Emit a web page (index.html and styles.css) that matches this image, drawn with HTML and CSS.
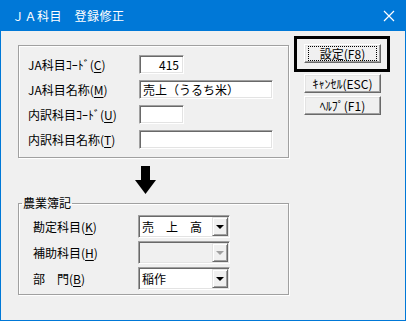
FILE: index.html
```html
<!DOCTYPE html>
<html lang="ja">
<head>
    <meta charset="UTF-8">
    <title>ＪＡ科目　登録修正</title>
    <link rel="stylesheet" href="styles.css">
</head>
<body>
    <div class="window">
        <div class="titlebar">
            <span class="title">ＪＡ科目　登録修正</span>
            <svg class="close" width="12" height="12" viewBox="0 0 12 12">
                <path d="M1 1L11 11M11 1L1 11" stroke="#fff" stroke-width="1.2" fill="none"/>
            </svg>
        </div>
        <div class="client">
            <div class="left">
                <div class="group">
                    <label class="lbl">JA科目ｺｰﾄﾞ(<u>C</u>)</label>
                    <div class="edit short num">415</div>
                    <label class="lbl">JA科目名称(<u>M</u>)</label>
                    <div class="edit long">売上（うるち米）</div>
                    <label class="lbl">内訳科目ｺｰﾄﾞ(<u>U</u>)</label>
                    <div class="edit short"></div>
                    <label class="lbl">内訳科目名称(<u>T</u>)</label>
                    <div class="edit long"></div>
                </div>

                <svg class="arrow" width="21" height="28" viewBox="0 0 21 28">
                    <rect x="6" y="0" width="9" height="15" fill="#000"/>
                    <polygon points="0,14 21,14 10.5,28" fill="#000"/>
                </svg>

                <fieldset class="group2">
                    <legend>農業簿記</legend>
                    <label class="lbl">勘定科目(<u>K</u>)</label>
                    <div class="combo">
                        <span class="combo-text">売　上　高</span>
                        <span class="drop"><i class="tri"></i></span>
                    </div>
                    <label class="lbl">補助科目(<u>H</u>)</label>
                    <div class="combo disabled">
                        <span class="combo-text"></span>
                        <span class="drop"><i class="tri"></i></span>
                    </div>
                    <label class="lbl">部　門(<u>B</u>)</label>
                    <div class="combo">
                        <span class="combo-text">稲作</span>
                        <span class="drop"><i class="tri"></i></span>
                    </div>
                </fieldset>
            </div>

            <div class="right">
                <div class="default-frame">
                    <button class="btn"><span class="focus">設定(F8)</span></button>
                </div>
                <button class="btn cancel">ｷｬﾝｾﾙ(ESC)</button>
                <button class="btn help">ﾍﾙﾌﾟ(F1)</button>
            </div>
        </div>
    </div>
</body>
</html>
```

FILE: styles.css
```css
body {
    margin: 0;
    font-family: "Noto Sans CJK JP", sans-serif;
    font-size: 12px;
    color: #000;
}

.window {
    width: 406px;
    height: 321px;
    box-sizing: border-box;
    background-color: #0078d7;
    border: 1px solid #0078d7;
    border-top: none;
    display: flex;
    flex-direction: column;
}

.titlebar {
    height: 31px;
    display: flex;
    align-items: center;
    justify-content: space-between;
    padding: 0 10px 0 11px;
}
.title {
    color: #fff;
    font-size: 12px;
    letter-spacing: 0.5px;
}
.close {
    display: block;
}

.client {
    flex: 1;
    background-color: #f0f0f0;
    display: flex;
    align-items: flex-start;
}

.left {
    width: 271px;
    margin: 14px 0 0 17px;
    display: flex;
    flex-direction: column;
}

.group {
    height: 113px;
    box-sizing: border-box;
    border: 1px solid #a0a0a0;
    box-shadow: inset 1px 1px 0 #fff, 1px 1px 0 #fff;
    padding: 9px 0 0 9px;
    display: grid;
    grid-template-columns: 111px auto;
    grid-auto-rows: 19px;
    row-gap: 6px;
    align-items: center;
}

.lbl u {
    text-decoration: underline;
    text-underline-offset: 2px;
}
.lbl {
    line-height: 16px;
    white-space: nowrap;
}

.edit {
    height: 19px;
    box-sizing: border-box;
    background: #fff;
    border: 1px solid;
    border-color: #a0a0a0 #fff #fff #a0a0a0;
    box-shadow: inset 1px 1px 0 #696969, inset -1px -1px 0 #e3e3e3;
    line-height: 17px;
    padding: 0 4px 0 3px;
    white-space: nowrap;
}
.short {
    width: 45px;
}
.long {
    width: 134px;
}
.num {
    text-align: right;
}

.arrow {
    display: block;
    margin: 8px 0 0 117px;
}

.group2 {
    margin: 1px 0 0 0;
    padding: 4px 0 4px 14px;
    border: 1px solid #a0a0a0;
    box-shadow: inset 1px 1px 0 #fff, 1px 1px 0 #fff;
    min-inline-size: 0;
    display: grid;
    grid-template-columns: 105px auto;
    grid-auto-rows: 23px;
    row-gap: 3px;
    align-items: center;
}
.group2 legend {
    margin-left: -11px;
    padding: 0 1px;
    line-height: 16px;
}

.combo {
    width: 92px;
    height: 23px;
    box-sizing: border-box;
    background: #fff;
    border: 1px solid;
    border-color: #a0a0a0 #fff #fff #a0a0a0;
    box-shadow: inset 1px 1px 0 #696969, inset -1px -1px 0 #e3e3e3;
    padding: 1px;
    display: flex;
}
.combo-text {
    flex: 1;
    line-height: 19px;
    padding-left: 2px;
    white-space: nowrap;
}
.drop {
    width: 16px;
    box-sizing: border-box;
    background: #f0f0f0;
    border: 1px solid;
    border-color: #e3e3e3 #696969 #696969 #e3e3e3;
    box-shadow: inset 1px 1px 0 #fff, inset -1px -1px 0 #a0a0a0;
    display: flex;
    align-items: center;
    justify-content: center;
}
.tri {
    width: 0;
    height: 0;
    border-left: 4px solid transparent;
    border-right: 4px solid transparent;
    border-top: 4px solid #000;
    margin-top: 1px;
}
.combo.disabled {
    background: #f0f0f0;
}
.combo.disabled .tri {
    border-top-color: #a0a0a0;
}

.right {
    margin: 5px 0 0 5px;
    display: flex;
    flex-direction: column;
    align-items: flex-start;
}

.default-frame {
    border: 3px solid #000;
    padding: 5px 6px 6px 7px;
}

.btn {
    width: 77px;
    height: 19px;
    box-sizing: border-box;
    margin: 0;
    padding: 0;
    font-family: "Noto Sans CJK JP", sans-serif;
    font-size: 12px;
    color: #000;
    background: #f0f0f0;
    border: 1px solid;
    border-color: #fff #696969 #696969 #fff;
    box-shadow: inset -1px -1px 0 #a0a0a0, inset 1px 1px 0 #e3e3e3;
    line-height: 15px;
    display: flex;
    align-items: center;
    justify-content: center;
}
.focus {
    display: block;
    width: 67px;
    height: 13px;
    line-height: 13px;
    outline: 1px dotted #000;
}
.cancel {
    margin: 2px 0 0 10px;
}
.help {
    margin: 3px 0 0 10px;
}
```
